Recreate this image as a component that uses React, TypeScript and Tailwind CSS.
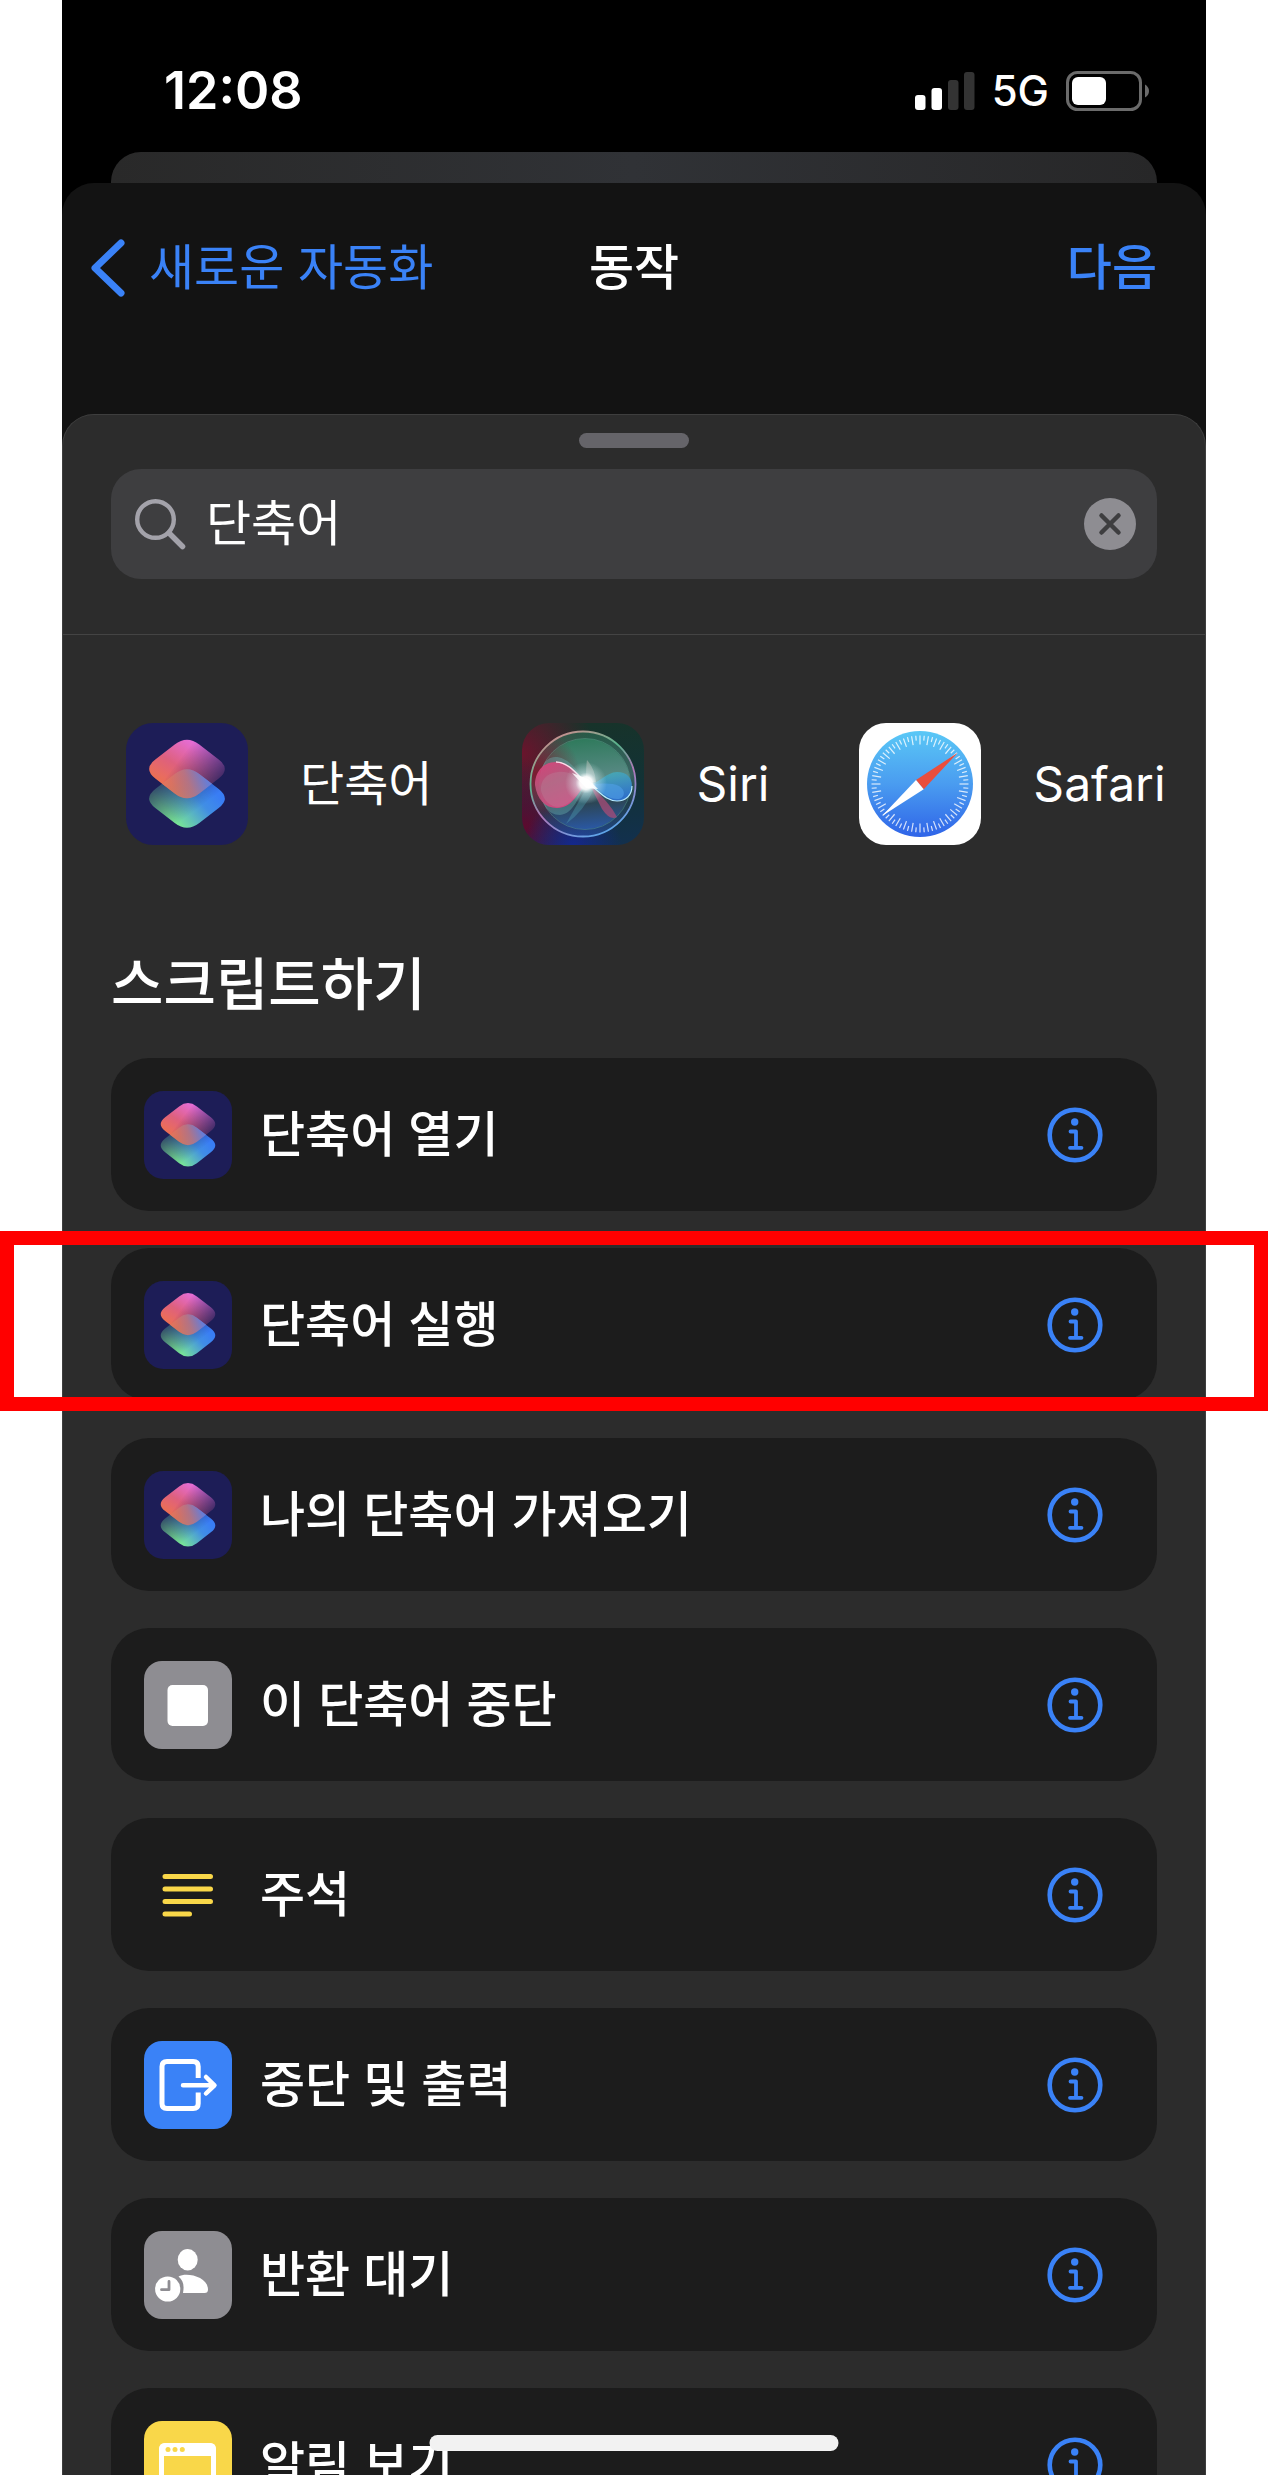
import { useState, type ReactNode } from "react";

const DIAMOND =
  "M48.7 21.5Q61 12 73.3 21.5L92.7 36.5Q105 46 92.7 55.5L73.3 70.5Q61 80 48.7 70.5L29.3 55.5Q17 46 29.3 36.5Z";
const LOWER_DIAMOND =
  "M48.7 51Q61 41.5 73.3 51L92.7 66Q105 75.5 92.7 85L73.3 100Q61 109.5 48.7 100L29.3 85Q17 75.5 29.3 66Z";

/* Gradients and the layered-diamond mark that several icons share. */
function IconDefs() {
  return (
    <svg className="absolute size-0" aria-hidden="true">
      <defs>
        <linearGradient id="top-fill" gradientUnits="userSpaceOnUse" x1="66" y1="16" x2="36" y2="62">
          <stop offset="0" stopColor="#ec70e0" />
          <stop offset="0.55" stopColor="#e4627f" />
          <stop offset="1" stopColor="#f47350" />
        </linearGradient>
        <linearGradient id="top-fade" gradientUnits="userSpaceOnUse" x1="60" y1="28" x2="94" y2="54">
          <stop offset="0" stopColor="#fff" stopOpacity="0.97" />
          <stop offset="1" stopColor="#fff" stopOpacity="0.22" />
        </linearGradient>
        <linearGradient id="bottom-fill" gradientUnits="userSpaceOnUse" x1="90" y1="70" x2="52" y2="102">
          <stop offset="0" stopColor="#3a80fa" />
          <stop offset="0.35" stopColor="#4292e8" />
          <stop offset="1" stopColor="#7cec98" />
        </linearGradient>
        <linearGradient id="bottom-fade" gradientUnits="userSpaceOnUse" x1="34" y1="64" x2="58" y2="96">
          <stop offset="0" stopColor="#fff" stopOpacity="0.3" />
          <stop offset="1" stopColor="#fff" stopOpacity="0.97" />
        </linearGradient>
        <linearGradient id="overlap" gradientUnits="userSpaceOnUse" x1="48" y1="70" x2="80" y2="56">
          <stop offset="0.05" stopColor="#e07860" stopOpacity="0.6" />
          <stop offset="0.5" stopColor="#b87884" stopOpacity="0.8" />
          <stop offset="1" stopColor="#6880d8" stopOpacity="0.9" />
        </linearGradient>
        <mask id="top-mask" maskUnits="userSpaceOnUse" x="0" y="0" width="122" height="122">
          <rect width="122" height="122" fill="url(#top-fade)" />
        </mask>
        <mask id="bottom-mask" maskUnits="userSpaceOnUse" x="0" y="0" width="122" height="122">
          <rect width="122" height="122" fill="url(#bottom-fade)" />
        </mask>
        <clipPath id="top-clip">
          <path d={DIAMOND} />
        </clipPath>
        <symbol id="shortcuts" viewBox="0 0 122 122">
          <rect width="122" height="122" rx="27" fill="#1d1d57" />
          <g mask="url(#bottom-mask)">
            <path d={LOWER_DIAMOND} fill="url(#bottom-fill)" />
          </g>
          <g mask="url(#top-mask)">
            <path d={DIAMOND} fill="url(#top-fill)" />
          </g>
          <g clipPath="url(#top-clip)">
            <path d={LOWER_DIAMOND} fill="url(#overlap)" />
          </g>
        </symbol>
      </defs>
    </svg>
  );
}

function ShortcutsIcon({ className }: { className: string }) {
  return (
    <svg className={className} aria-hidden="true">
      <use href="#shortcuts" />
    </svg>
  );
}

function SiriIcon() {
  return (
    <svg viewBox="0 0 122 122" className="size-[122px] shrink-0" aria-hidden="true">
      <defs>
        <radialGradient id="siri-tl" cx="0" cy="0.25" r="0.6">
          <stop offset="0" stopColor="#6a142c" />
          <stop offset="1" stopColor="#6a142c" stopOpacity="0" />
        </radialGradient>
        <radialGradient id="siri-bl" cx="0.02" cy="0.85" r="0.55">
          <stop offset="0" stopColor="#5c0a2e" />
          <stop offset="1" stopColor="#560c3e" stopOpacity="0" />
        </radialGradient>
        <radialGradient id="siri-bm" cx="0.42" cy="1" r="0.4">
          <stop offset="0" stopColor="#14288c" />
          <stop offset="1" stopColor="#14288c" stopOpacity="0" />
        </radialGradient>
        <linearGradient id="siri-base" x1="0.7" y1="0" x2="0.8" y2="1">
          <stop offset="0" stopColor="#17332a" />
          <stop offset="0.5" stopColor="#123236" />
          <stop offset="1" stopColor="#12304e" />
        </linearGradient>
        <linearGradient id="siri-ring" x1="0.2" y1="0" x2="0.7" y2="1">
          <stop offset="0" stopColor="#d88a90" />
          <stop offset="0.35" stopColor="#58b48c" />
          <stop offset="0.6" stopColor="#b078b8" />
          <stop offset="1" stopColor="#58a8ec" />
        </linearGradient>
        <linearGradient id="siri-orb" x1="0.45" y1="0" x2="0.55" y2="1">
          <stop offset="0" stopColor="#2f7a5c" />
          <stop offset="0.45" stopColor="#5a8a86" />
          <stop offset="0.72" stopColor="#2c4656" />
          <stop offset="1" stopColor="#2a58a4" />
        </linearGradient>
        <radialGradient id="siri-orb-left" cx="0.05" cy="0.4" r="0.42">
          <stop offset="0" stopColor="#7c1a30" />
          <stop offset="1" stopColor="#7c1a30" stopOpacity="0" />
        </radialGradient>
        <linearGradient id="siri-pink" x1="0" y1="0" x2="0.5" y2="1">
          <stop offset="0" stopColor="#e0407c" />
          <stop offset="0.5" stopColor="#b8587c" />
          <stop offset="1" stopColor="#dc4480" />
        </linearGradient>
        <linearGradient id="siri-cyan" x1="0" y1="0" x2="0.3" y2="1">
          <stop offset="0" stopColor="#48b4b4" />
          <stop offset="1" stopColor="#2f78dc" />
        </linearGradient>
        <radialGradient id="siri-flare">
          <stop offset="0" stopColor="#fff" />
          <stop offset="0.3" stopColor="#fff" stopOpacity="0.95" />
          <stop offset="0.5" stopColor="#e8fbff" stopOpacity="0.45" />
          <stop offset="1" stopColor="#cfeeee" stopOpacity="0" />
        </radialGradient>
        <clipPath id="siri-clip">
          <rect width="122" height="122" rx="27" />
        </clipPath>
      </defs>
      <g clipPath="url(#siri-clip)">
        <rect width="122" height="122" fill="url(#siri-base)" />
        <rect width="122" height="122" fill="url(#siri-tl)" />
        <rect width="122" height="122" fill="url(#siri-bl)" />
        <rect width="122" height="122" fill="url(#siri-bm)" />
        <circle cx="61" cy="61" r="52" fill="url(#siri-orb)" opacity="0.55" />
        <circle cx="63" cy="61" r="45" fill="url(#siri-orb)" />
        <circle cx="61" cy="61" r="52" fill="url(#siri-orb-left)" />
        <circle cx="63" cy="61" r="45.5" fill="none" stroke="#6cc4a8" strokeOpacity="0.35" />
        <circle cx="61" cy="61" r="52.500" fill="none" stroke="url(#siri-ring)" strokeWidth="1.800" />
        <path d="M64 60C54 46 46 34 33 34C20 35 18 48 18 64C18 80 26 92 38 92C52 91 57 72 64 60Z" fill="#6cb4b4" opacity="0.4" />
        <path d="M64 60C54 50 46 39 34 39C20 39 13 50 13 62C15 76 23 85 35 85C50 85 56 70 64 60Z" fill="url(#siri-pink)" opacity="0.92" />
        <path d="M64 60C54 52 46 48 36 49C24 50 18 58 19 68C22 78 28 84 37 84C50 82 56 70 64 60Z" fill="#b88098" opacity="0.4" />
        <path d="M34 39C46 39 54 50 64 60" fill="none" stroke="#ffd8e8" strokeWidth="1.400" />
        <path d="M66 61C76 62 84 49 95 49C105 49 110 55 110 63C110 72 104 78 95 78C84 78 76 66 66 61Z" fill="url(#siri-cyan)" opacity="0.85" />
        <path d="M70 62C80 60 90 60 97 63C104 67 103 75 97 76C86 77 78 68 70 62Z" fill="#50a0e8" opacity="0.6" />
        <path d="M68 62C78 69 84 78 95 78C104 78 110 72 110 63" fill="none" stroke="#b8ecff" strokeWidth="1.200" />
        <path d="M64 59Q64 42 65 37Q73 46 74 59Z" fill="#e4d8d0" opacity="0.35" />
        <path d="M66 62L44 101Q62 88 72 66Z" fill="#58b8c8" opacity="0.3" />
        <path d="M68 62Q88 80 95 94Q88 98 80 86Z" fill="#b04c78" opacity="0.7" />
        <circle cx="64" cy="60" r="21" fill="url(#siri-flare)" />
        <path d="M50 50L66 56L76 66L64 65Z" fill="#fff" opacity="0.85" />
      </g>
    </svg>
  );
}

function SafariIcon() {
  const ticks = Array.from({ length: 72 }, (_, i) => i);
  return (
    <svg viewBox="0 0 122 122" className="size-[122px] shrink-0" aria-hidden="true">
      <defs>
        <linearGradient id="safari-dial" x1="0" y1="0" x2="0" y2="1">
          <stop offset="0" stopColor="#5ac8f6" />
          <stop offset="0.5" stopColor="#4a9cf0" />
          <stop offset="1" stopColor="#2f64e8" />
        </linearGradient>
      </defs>
      <rect width="122" height="122" rx="27" fill="#fff" />
      <circle cx="61" cy="61" r="53" fill="url(#safari-dial)" />
      {ticks.map((i) => (
        <path
          key={i}
          d={i % 2 === 0 ? "M61 12.5V21.5" : "M61 12.5V17.5"}
          stroke="#fff"
          strokeOpacity="0.8"
          strokeWidth="1.2"
          transform={`rotate(${i * 5} 61 61)`}
        />
      ))}
      <path d="M98.7 29.7L57 57L64.7 66.3Z" fill="#ea4e3d" />
      <path d="M23 93L57 57L64.7 66.3Z" fill="#fff" />
    </svg>
  );
}

function Tile({ fill, children }: { fill?: string; children: ReactNode }) {
  return (
    <svg viewBox="0 0 88 88" className="size-[88px] shrink-0" aria-hidden="true">
      {fill && <rect width="88" height="88" rx="18" fill={fill} />}
      {children}
    </svg>
  );
}

const StopTile = () => (
  <Tile fill="#8e8d92">
    <rect x="23.5" y="24" width="40.5" height="41" rx="5" fill="#fff" />
  </Tile>
);

const CommentTile = () => (
  <Tile>
    <path d="M21 25.5H66.500M21 38H66.500M21 50.500H66.500M21 63H45.500" stroke="#f9d749" strokeWidth="5" strokeLinecap="round" />
  </Tile>
);

const OutputTile = () => (
  <Tile fill="#3a82f7">
    <g fill="none" stroke="#fff" strokeWidth="5" strokeLinecap="round" strokeLinejoin="round">
      <path strokeLinecap="butt" d="M54.200 37V25.500Q54.200 20.500 49.200 20.500H23Q18 20.500 18 25.500V62.500Q18 67.500 23 67.500H49.200Q54.200 67.500 54.200 62.500V51.500" />
      <path d="M39 44.300H69M62 36L70.500 44.300L62 52.500" strokeWidth="4.500" />
    </g>
  </Tile>
);

const WaitTile = () => (
  <Tile fill="#8e8d92">
    <ellipse cx="43.700" cy="28.700" rx="10" ry="10.700" fill="#fff" />
    <path d="M34.500 45.500C43 41 64 46 64 58.500Q64 62 60.500 62H39C40.500 54 39 49 34.500 45.500Z" fill="#fff" />
    <circle cx="23.700" cy="58" r="12.600" fill="#fff" />
    <path d="M25 50.500V58.700H17.500" fill="none" stroke="#8e8d92" strokeWidth="2.800" strokeLinecap="round" strokeLinejoin="round" />
  </Tile>
);

const AlertTile = () => (
  <Tile fill="#f9d749">
    <rect x="17.500" y="24.500" width="52" height="44" rx="4" fill="none" stroke="#fff" strokeWidth="5" />
    <path d="M15 35V28Q15 22 21 22H66Q72 22 72 28V35Z" fill="#fff" />
    <circle cx="24" cy="28.500" r="2.500" fill="#f9d749" />
    <circle cx="31" cy="28.500" r="2.500" fill="#f9d749" />
    <circle cx="38.300" cy="28.500" r="2.500" fill="#f9d749" />
  </Tile>
);

const ActionShortcutIcon = () => <ShortcutsIcon className="size-[88px] shrink-0" />;

function InfoIcon() {
  return (
    <svg viewBox="0 0 56 56" className="size-14" fill="none" stroke="#3a82f7" aria-hidden="true">
      <circle cx="28" cy="28" r="25.300" strokeWidth="4.600" />
      <circle cx="27.700" cy="15" r="3.700" fill="#3a82f7" stroke="none" />
      <path d="M23.500 24.500H29V40.500M23 40.800H34.500" strokeWidth="3.800" strokeLinecap="round" strokeLinejoin="round" />
    </svg>
  );
}

function StatusBar() {
  return (
    <div className="flex h-[152px] items-center justify-between pt-[30px] pr-[56px] pl-[102px] text-white">
      <span className="font-[Inter,sans-serif] text-[52px] leading-none font-semibold">12:08</span>
      <div className="flex items-center gap-[17px]">
        <svg viewBox="0 0 60 40" className="h-10 w-[60px]" aria-hidden="true">
          <rect x="0" y="24" width="10.500" height="15" rx="3" fill="#fff" />
          <rect x="16.500" y="17" width="10.500" height="22" rx="3" fill="#fff" />
          <rect x="33" y="9" width="10.500" height="30" rx="3" fill="#333" />
          <rect x="49" y="1" width="10.500" height="38" rx="3" fill="#333" />
        </svg>
        <span className="font-[Inter,sans-serif] text-[42px] leading-none font-medium">5G</span>
        <svg viewBox="0 0 84 40" className="h-10 w-[84px]" aria-hidden="true">
          <rect x="1.500" y="1.500" width="73" height="37" rx="10" fill="none" stroke="#6b6b6b" strokeWidth="3" />
          <rect x="6" y="6" width="34" height="28" rx="6" fill="#fff" />
          <path d="M79 13.500Q83 16 83 20T79 26.500Z" fill="#6b6b6b" />
        </svg>
      </div>
    </div>
  );
}

const apps = [
  { name: "단축어", icon: <ShortcutsIcon className="size-[122px] shrink-0" /> },
  { name: "Siri", icon: <SiriIcon /> },
  { name: "Safari", icon: <SafariIcon /> },
];

const actions = [
  { name: "단축어 열기", Icon: ActionShortcutIcon },
  { name: "단축어 실행", Icon: ActionShortcutIcon, highlighted: true },
  { name: "나의 단축어 가져오기", Icon: ActionShortcutIcon },
  { name: "이 단축어 중단", Icon: StopTile },
  { name: "주석", Icon: CommentTile },
  { name: "중단 및 출력", Icon: OutputTile },
  { name: "반환 대기", Icon: WaitTile },
  { name: "알림 보기", Icon: AlertTile },
];

export default function App() {
  const [query, setQuery] = useState("단축어");

  return (
    <main
      lang="ko"
      className="relative h-screen overflow-hidden bg-white px-[62px] font-[Inter,'Noto_Sans_CJK_KR',sans-serif] text-[49px] leading-[60px] text-white"
    >
      <IconDefs />
      <div className="flex min-h-full flex-col bg-black">
        <StatusBar />
        <div className="mx-[49px] h-[31px] rounded-t-[30px] bg-linear-to-r from-[#292929] via-[#303236] to-[#272728]" />
        <div className="flex-1 rounded-t-[32px] bg-[#131313]">
          <header className="mb-[61px] grid h-[170px] grid-cols-[1fr_auto_1fr] items-center px-7">
            <button type="button" className="flex items-center gap-[24px] justify-self-start text-[#3a82f7]">
              <svg viewBox="0 0 35 58" className="h-[58px] w-[35px]" fill="none" stroke="currentColor" aria-hidden="true">
                <path d="M31 4L5 29L31 54" strokeWidth="7" strokeLinecap="round" strokeLinejoin="round" />
              </svg>
              새로운 자동화
            </button>
            <h1 className="font-medium">동작</h1>
            <button type="button" className="mr-[21px] justify-self-end font-medium text-[#3a82f7]">
              다음
            </button>
          </header>

          <section className="rounded-t-[32px] border border-b-0 border-[#3e3e3e] bg-[#2c2c2c] pt-[18px]">
            <div className="mx-auto h-[15px] w-[110px] rounded-full bg-[#656469]" />
            <div className="mx-12 mt-[21px] flex h-[110px] items-center gap-[20px] rounded-[30px] bg-[#3e3e40] pr-[21px] pl-6">
              <svg viewBox="0 0 51 51" className="size-[51px] shrink-0" fill="none" stroke="#a3a2aa" strokeLinecap="round" aria-hidden="true">
                <circle cx="20.500" cy="20.500" r="18.300" strokeWidth="4.400" />
                <path d="M34 34L47.500 47.500" strokeWidth="5.500" />
              </svg>
              <input
                type="text"
                aria-label="검색"
                value={query}
                onChange={(e) => setQuery(e.target.value)}
                className="min-w-0 flex-1 bg-transparent outline-none"
              />
              <button type="button" aria-label="지우기" onClick={() => setQuery("")} className="shrink-0">
                <svg viewBox="0 0 52 52" className="size-[52px]" aria-hidden="true">
                  <circle cx="26" cy="26" r="26" fill="#8e8d92" />
                  <path d="M17.500 17.500L34.500 34.500M34.500 17.500L17.500 34.500" stroke="#3e3e40" strokeWidth="4.500" strokeLinecap="round" />
                </svg>
              </button>
            </div>

            <hr className="mt-[55px] border-t border-[#444]" />

            <div className="mt-[88px] flex gap-[90px] pl-[63px] text-[48px] whitespace-nowrap">
              {apps.map((app) => (
                <button type="button" key={app.name} className="flex items-center gap-[52px]">
                  {app.icon}
                  {app.name}
                </button>
              ))}
            </div>

            <h2 className="mx-12 mt-[108px] mb-[41px] text-[57px] leading-[64px] font-medium">스크립트하기</h2>

            <ul className="mx-12 flex flex-col gap-[37px]">
              {actions.map(({ name, Icon, highlighted }) => (
                <li key={name} className="relative flex h-[153px] items-center rounded-[38px] bg-[#1c1c1c] pr-[54px] pl-[33px]">
                  <button type="button" className="flex flex-1 items-center gap-[28px] text-left font-medium">
                    <Icon />
                    {name}
                  </button>
                  <button type="button" aria-label={`${name} 정보`}>
                    <InfoIcon />
                  </button>
                  {highlighted && (
                    <div className="pointer-events-none absolute -inset-x-[111px] -top-[17px] h-[180px] border-[14px] border-[#ff0000]" />
                  )}
                </li>
              ))}
            </ul>
          </section>
        </div>
      </div>
      <div className="absolute bottom-6 left-1/2 h-4 w-[409px] -translate-x-1/2 rounded-full bg-[#f2f2f2]" />
    </main>
  );
}
